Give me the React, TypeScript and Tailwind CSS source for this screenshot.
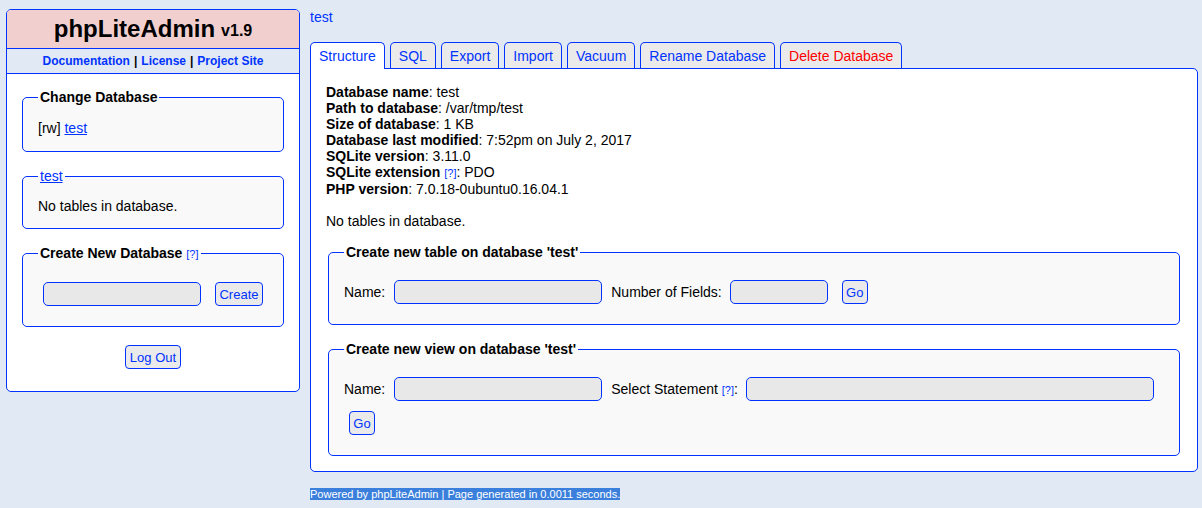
import React from "react";

const F = { fontFamily: '"Liberation Sans", Arial, sans-serif' };

function Help() {
  return <a className="text-[11px] font-normal text-[#0033ff] cursor-pointer">[?]</a>;
}

function Input({ w }: { w: string }) {
  return <input className={`${w} h-[24px] bg-[#e8e8e8] border border-[#0033ff] rounded-[5px] outline-none`} />;
}

function Btn({ children, className = "" }: { children: React.ReactNode; className?: string }) {
  return (
    <button className={`h-[24px] px-0 whitespace-nowrap bg-[#eaeaea] border border-[#0033ff] rounded-[4px] text-[#0033ff] text-[13px] leading-none ${className}`}>
      {children}
    </button>
  );
}

export default function App() {
  const tabs = ["SQL", "Export", "Import", "Vacuum", "Rename Database"];
  return (
    <div style={F} className="w-[1202px] h-[508px] bg-[#e0e9f4] text-[14px] leading-[16px] text-black overflow-hidden">
      <div className="flex items-start pl-[6px] pt-[9px] gap-[10px]">
        {/* Sidebar */}
        <div className="w-[294px] border border-[#0033ff] rounded-[5px] bg-white overflow-hidden">
          <div className="h-[39px] bg-[#f2cfcf] border-b border-[#0033ff] flex items-center justify-center font-bold">
            <span className="text-[24px] leading-[28px]">phpLiteAdmin</span>
            <span className="text-[16px] ml-[6px] mt-[4px]">v1.9</span>
          </div>
          <div className="h-[25px] bg-[#e0e9f4] border-b border-[#0033ff] flex items-center justify-center text-[12px] font-bold">
            <a className="text-[#0033ff]">Documentation</a>
            <span className="mx-[4px]">|</span>
            <a className="text-[#0033ff]">License</a>
            <span className="mx-[4px]">|</span>
            <a className="text-[#0033ff]">Project Site</a>
          </div>
          <div className="p-[15px] flex flex-col gap-[16px]">
            <fieldset className="border border-[#0033ff] rounded-[5px] bg-[#f9f9f9] px-[15px] pt-[15px] pb-[15px]">
              <legend className="px-[2px] font-bold">Change Database</legend>
              <div>
                [rw] <a className="text-[#0033ff] underline">test</a>
              </div>
            </fieldset>
            <fieldset className="border border-[#0033ff] rounded-[5px] bg-[#f9f9f9] px-[15px] pt-[14px] pb-[14px]">
              <legend className="px-[2px]">
                <a className="text-[#0033ff] underline">test</a>
              </legend>
              <div>No tables in database.</div>
            </fieldset>
            <fieldset className="border border-[#0033ff] rounded-[5px] bg-[#f9f9f9] pl-[20px] pt-[20px] pb-[20px]">
              <legend className="px-[2px] ml-[-5px] font-bold">
                Create New Database <Help />
              </legend>
              <div className="flex items-center gap-[14px]">
                <Input w="w-[158px]" />
                <Btn className="w-[48px]">Create</Btn>
              </div>
            </fieldset>
            <div className="flex justify-center pt-[2px] pb-[7px]">
              <Btn className="w-[56px]">Log Out</Btn>
            </div>
          </div>
        </div>

        {/* Main */}
        <div className="w-[888px]">
          <div className="h-[16px]">
            <a className="text-[#0033ff]">test</a>
          </div>
          <div className="flex items-start gap-[5px] mt-[17px] relative z-10 h-[27px]">
            <div className="h-[27px] px-[8px] pt-[5px] bg-white border border-b-0 border-[#0033ff] rounded-t-[5px] text-[#0033ff]">
              Structure
            </div>
            {tabs.map((t) => (
              <div key={t} className="h-[26px] px-[8px] pt-[5px] bg-[#eaeaea] border border-b-0 border-[#0033ff] rounded-t-[5px] text-[#0033ff]">
                {t}
              </div>
            ))}
            <div className="h-[26px] px-[8px] pt-[5px] bg-[#eaeaea] border border-b-0 border-[#0033ff] rounded-t-[5px] text-[#ff0000]">
              Delete Database
            </div>
          </div>
          <div className="border border-[#0033ff] rounded-b-[5px] rounded-tr-[5px] bg-white pl-[15px] pr-[17px] pt-[15px] pb-[15px] -mt-[1px]">
            <div>
              <div><b>Database name</b>: test</div>
              <div><b>Path to database</b>: /var/tmp/test</div>
              <div><b>Size of database</b>: 1 KB</div>
              <div><b>Database last modified</b>: 7:52pm on July 2, 2017</div>
              <div><b>SQLite version</b>: 3.11.0</div>
              <div><b>SQLite extension</b> <Help />: PDO</div>
              <div><b>PHP version</b>: 7.0.18-0ubuntu0.16.04.1</div>
              <div className="mt-[16px]">No tables in database.</div>
            </div>
            <fieldset className="ml-[2px] mt-[15px] border border-[#0033ff] rounded-[5px] bg-[#f9f9f9] pl-[15px] pt-[20px] pb-[20px]">
              <legend className="px-[2px] font-bold">Create new table on database 'test'</legend>
              <div className="flex items-center">
                <span>Name:</span>
                <span className="ml-[9px]"><Input w="w-[208px]" /></span>
                <span className="ml-[9px]">Number of Fields:</span>
                <span className="ml-[8px]"><Input w="w-[98px]" /></span>
                <Btn className="ml-[14px] w-[26px]">Go</Btn>
              </div>
            </fieldset>
            <fieldset className="ml-[2px] mt-[16px] border border-[#0033ff] rounded-[5px] bg-[#f9f9f9] pl-[15px] pt-[20px] pb-[20px]">
              <legend className="px-[2px] font-bold">Create new view on database 'test'</legend>
              <div className="flex items-center">
                <span>Name:</span>
                <span className="ml-[9px]"><Input w="w-[208px]" /></span>
                <span className="ml-[9px]">
                  Select Statement <Help />:
                </span>
                <span className="ml-[8px]"><Input w="w-[408px]" /></span>
              </div>
              <div className="mt-[10px] ml-[5px] flex">
                <Btn className="w-[26px]">Go</Btn>
              </div>
            </fieldset>
          </div>
          <div className="mt-[16px] text-[11px] leading-[13px]">
            <span className="bg-[#3b7fdc] text-white">
              Powered by phpLiteAdmin | Page generated in 0.0011 seconds.
            </span>
          </div>
        </div>
      </div>
    </div>
  );
}
